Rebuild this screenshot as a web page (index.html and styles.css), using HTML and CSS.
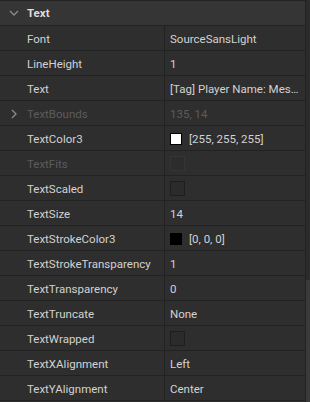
FILE: index.html
```html
<!DOCTYPE html>
<html lang="en">
<head>
    <meta charset="UTF-8">
    <title>Properties - Text</title>
    <link rel="stylesheet" href="styles.css">
</head>
<body>
    <div class="panel">
        <div class="list">
            <div class="row header">
                <div class="expander">
                    <svg width="10" height="6" viewBox="0 0 10 6"><path d="M1 1 L5 5 L9 1" fill="none" stroke="#8c8c8c" stroke-width="1.3"/></svg>
                </div>
                <span class="title">Text</span>
            </div>

            <div class="row"><div class="name"><div class="expander"></div>Font</div><div class="value">SourceSansLight</div></div>
            <div class="row"><div class="name"><div class="expander"></div>LineHeight</div><div class="value">1</div></div>
            <div class="row"><div class="name"><div class="expander"></div>Text</div><div class="value">[Tag] Player Name: Mes…</div></div>
            <div class="row disabled">
                <div class="name">
                    <div class="expander">
                        <svg width="6" height="10" viewBox="0 0 6 10"><path d="M1 1 L5 5 L1 9" fill="none" stroke="#8c8c8c" stroke-width="1.3"/></svg>
                    </div>TextBounds
                </div>
                <div class="value">135, 14</div>
            </div>
            <div class="row"><div class="name"><div class="expander"></div>TextColor3</div><div class="value"><span class="swatch white"></span>[255, 255, 255]</div></div>
            <div class="row disabled"><div class="name"><div class="expander"></div>TextFits</div><div class="value"><span class="check"></span></div></div>
            <div class="row"><div class="name"><div class="expander"></div>TextScaled</div><div class="value"><span class="check"></span></div></div>
            <div class="row"><div class="name"><div class="expander"></div>TextSize</div><div class="value">14</div></div>
            <div class="row"><div class="name"><div class="expander"></div>TextStrokeColor3</div><div class="value"><span class="swatch black"></span>[0, 0, 0]</div></div>
            <div class="row"><div class="name"><div class="expander"></div>TextStrokeTransparency</div><div class="value">1</div></div>
            <div class="row"><div class="name"><div class="expander"></div>TextTransparency</div><div class="value">0</div></div>
            <div class="row"><div class="name"><div class="expander"></div>TextTruncate</div><div class="value">None</div></div>
            <div class="row"><div class="name"><div class="expander"></div>TextWrapped</div><div class="value"><span class="check"></span></div></div>
            <div class="row"><div class="name"><div class="expander"></div>TextXAlignment</div><div class="value">Left</div></div>
            <div class="row"><div class="name"><div class="expander"></div>TextYAlignment</div><div class="value">Center</div></div>
        </div>
        <div class="scrollbar">
            <div class="thumb"></div>
        </div>
    </div>
</body>
</html>
```

FILE: styles.css
```css
:root {
    --row-bg: #2e2e2e;
    --header-bg: #353535;
    --line: #222222;
    --text: #d2d2d2;
    --text-disabled: #5c5c5c;
}

* {
    box-sizing: border-box;
    margin: 0;
    padding: 0;
}

body {
    background: var(--row-bg);
    font-family: Roboto, 'Noto Sans', Arial, sans-serif;
    font-size: 11.5px;
    color: var(--text);
}

.panel {
    display: flex;
    width: 310px;
    height: 402px;
    overflow: hidden;
}

.list {
    width: 306px;
    border-top: 1px solid var(--line);
    border-right: 1px solid var(--line);
}

.row {
    display: grid;
    grid-template-columns: 165px 1fr;
    height: 25px;
    background: var(--row-bg);
    border-bottom: 1px solid var(--line);
}

.row.header {
    display: flex;
    align-items: center;
    background: var(--header-bg);
}

.title {
    font-weight: bold;
    color: #dcdcdc;
}

.expander {
    width: 27px;
    flex-shrink: 0;
    display: flex;
    justify-content: center;
    align-items: center;
}

.name {
    display: flex;
    align-items: center;
    padding-top: 1px;
    border-right: 1px solid var(--line);
    white-space: nowrap;
}

.value {
    display: flex;
    align-items: center;
    padding-top: 1px;
    padding-left: 5px;
    white-space: nowrap;
}

.disabled .name,
.disabled .value {
    color: var(--text-disabled);
}

.swatch {
    width: 12px;
    height: 12px;
    margin-right: 7px;
    border: 1px solid #000;
}

.swatch.white {
    background: #fff;
}

.swatch.black {
    background: #000;
}

.check {
    width: 15px;
    height: 15px;
    background: #2b2b2b;
    border: 1px solid #1e1e1e;
}

.disabled .check {
    opacity: 0.5;
    border-color: #3a3a3a;
}

.scrollbar {
    flex: 1;
    display: flex;
    flex-direction: column;
    justify-content: flex-end;
    background: #2b2b2b;
}

.thumb {
    height: 122px;
    background: #3a3a3a;
}
```
